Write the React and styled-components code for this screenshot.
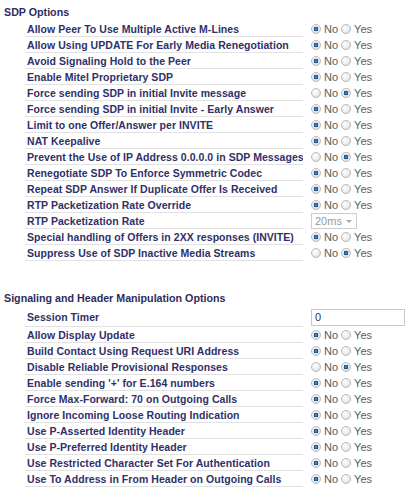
import React from "react";
import styled, { createGlobalStyle } from "styled-components";

const GlobalStyle = createGlobalStyle`
  body {
    margin: 0;
    background: #ffffff;
    font-family: "Liberation Sans", Arial, sans-serif;
  }
`;

const sdpOptions = [
  { label: "Allow Peer To Use Multiple Active M-Lines", value: "no" },
  { label: "Allow Using UPDATE For Early Media Renegotiation", value: "no" },
  { label: "Avoid Signaling Hold to the Peer", value: "no" },
  { label: "Enable Mitel Proprietary SDP", value: "no" },
  { label: "Force sending SDP in initial Invite message", value: "yes" },
  { label: "Force sending SDP in initial Invite - Early Answer", value: "no" },
  { label: "Limit to one Offer/Answer per INVITE", value: "no" },
  { label: "NAT Keepalive", value: "no" },
  { label: "Prevent the Use of IP Address 0.0.0.0 in SDP Messages", value: "yes" },
  { label: "Renegotiate SDP To Enforce Symmetric Codec", value: "no" },
  { label: "Repeat SDP Answer If Duplicate Offer Is Received", value: "no" },
  { label: "RTP Packetization Rate Override", value: "no" },
  { label: "RTP Packetization Rate", select: "20ms" },
  { label: "Special handling of Offers in 2XX responses (INVITE)", value: "no" },
  { label: "Suppress Use of SDP Inactive Media Streams", value: "yes" },
];

const signalingOptions = [
  { label: "Session Timer", input: "0" },
  { label: "Allow Display Update", value: "no" },
  { label: "Build Contact Using Request URI Address", value: "no" },
  { label: "Disable Reliable Provisional Responses", value: "yes" },
  { label: "Enable sending '+' for E.164 numbers", value: "no" },
  { label: "Force Max-Forward: 70 on Outgoing Calls", value: "no" },
  { label: "Ignore Incoming Loose Routing Indication", value: "no" },
  { label: "Use P-Asserted Identity Header", value: "no" },
  { label: "Use P-Preferred Identity Header", value: "no" },
  { label: "Use Restricted Character Set For Authentication", value: "no" },
  { label: "Use To Address in From Header on Outgoing Calls", value: "no" },
];

const Page = styled.div`
  padding: 4px 0 0 4px;
`;

const Section = styled.section`
  margin-bottom: ${(p) => (p.last ? "0" : "29px")};
`;

const SectionTitle = styled.h3`
  margin: 0;
  height: 17px;
  line-height: 17px;
  font-size: 10.7px;
  font-weight: bold;
  color: #2d2d5c;
`;

const Row = styled.div`
  display: grid;
  grid-template-columns: 278px 1fr;
  margin-left: 21px;
  height: ${(p) => (p.tall ? "20px" : "16px")};
`;

const Label = styled.div`
  display: flex;
  align-items: center;
  padding-left: 2px;
  border-bottom: 1px solid #e2e2e2;
  font-size: 10.5px;
  letter-spacing: 0.05px;
  font-weight: bold;
  color: #303068;
  white-space: nowrap;
  overflow: hidden;
`;

const Value = styled.div`
  display: flex;
  align-items: center;
  padding-left: 8px;
  font-size: 11px;
  color: #5a5a5a;
`;

const RadioLabel = styled.label`
  display: flex;
  align-items: center;
  margin-right: 3px;
`;

const Radio = styled.input.attrs({ type: "radio" })`
  appearance: none;
  margin: 0 3px 0 0;
  width: 10px;
  height: 10px;
  border-radius: 50%;
  border: 1px solid #b8b8b8;
  background: radial-gradient(circle at 40% 35%, #ffffff 0%, #ececec 55%, #d2d2d2 100%);

  &:checked {
    background: radial-gradient(circle 2.6px at 50% 50%, #4a9ad8 0%, #1c64a6 60%, #174e84 85%, transparent 100%),
      radial-gradient(circle at 40% 35%, #ffffff 0%, #ececec 55%, #d2d2d2 100%);
  }
`;

const FakeSelect = styled.div`
  display: flex;
  align-items: center;
  justify-content: space-between;
  box-sizing: border-box;
  width: 46px;
  height: 16px;
  padding: 0 4px 0 3px;
  border: 1px solid #cccccc;
  font-size: 11px;
  color: #9a9a9a;
`;

const Caret = styled.span`
  width: 0;
  height: 0;
  border-left: 3px solid transparent;
  border-right: 3px solid transparent;
  border-top: 3px solid #a8a8a8;
`;

const TextInput = styled.input`
  box-sizing: border-box;
  width: 94px;
  height: 17px;
  margin: 0;
  padding: 0 3px;
  border: 1px solid #c8c8c8;
  font-family: "Liberation Sans", Arial, sans-serif;
  font-size: 11px;
  color: #333333;
`;

const YesNo = ({ name, value }) => (
  <>
    <RadioLabel>
      <Radio name={name} defaultChecked={value === "no"} />
      No
    </RadioLabel>
    <RadioLabel>
      <Radio name={name} defaultChecked={value === "yes"} />
      Yes
    </RadioLabel>
  </>
);

const OptionRow = ({ option, name }) => (
  <Row tall={!!option.input}>
    <Label>{option.label}</Label>
    <Value>
      {option.select && (
        <FakeSelect>
          {option.select}
          <Caret />
        </FakeSelect>
      )}
      {option.input !== undefined && <TextInput defaultValue={option.input} />}
      {option.value && <YesNo name={name} value={option.value} />}
    </Value>
  </Row>
);

const OptionSection = ({ title, options, id, last }) => (
  <Section last={last}>
    <SectionTitle>{title}</SectionTitle>
    {options.map((o, i) => (
      <OptionRow key={o.label} option={o} name={`${id}-${i}`} />
    ))}
  </Section>
);

export default function App() {
  return (
    <Page>
      <GlobalStyle />
      <OptionSection title="SDP Options" options={sdpOptions} id="sdp" />
      <OptionSection
        title="Signaling and Header Manipulation Options"
        options={signalingOptions}
        id="sig"
        last
      />
    </Page>
  );
}
